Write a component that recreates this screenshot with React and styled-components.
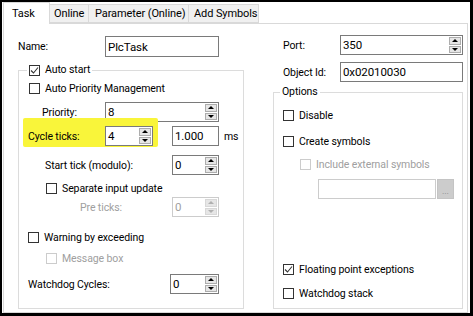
import React from 'react';
import styled, { createGlobalStyle } from 'styled-components';

const GlobalStyle = createGlobalStyle`
  body {
    margin: 0;
    background: #fff;
    font-family: Roboto, "Liberation Sans", Arial, sans-serif;
    font-size: 10.5px;
    letter-spacing: -0.1px;
    color: #000;
  }
`;

// outer window with the black frame of the screenshot
const Frame = styled.div`
  width: 473px;
  height: 316px;
  box-sizing: border-box;
  border-style: solid;
  border-color: #000;
  border-width: 2px 3px 3px 2px;
  padding: 0 2px 0 1px;
  background: #fff;
  display: flex;
  flex-direction: column;
`;

const TabStrip = styled.div`
  display: flex;
  align-items: flex-end;
  height: 21px;
  flex-shrink: 0;
`;

const Tab = styled.div`
  box-sizing: border-box;
  width: ${p => p.$w}px;
  height: ${p => (p.$active ? 22 : 19)}px;
  margin-bottom: ${p => (p.$active ? -1 : 0)}px;
  position: relative;
  z-index: ${p => (p.$active ? 1 : 0)};
  display: flex;
  align-items: center;
  padding-left: ${p => p.$pl}px;
  background: ${p => (p.$active ? '#fff' : '#f0f0f0')};
  border: 1px solid #d9d9d9;
  border-bottom: ${p => (p.$active ? 'none' : '1px solid #d9d9d9')};
  border-left: ${p => (p.$first ? '1px solid #d9d9d9' : 'none')};
  white-space: nowrap;
  font-size: 11px;
`;

const Panel = styled.div`
  flex: 1;
  display: flex;
  border: 1px solid #d9d9d9;
  padding: 0 4px 0 14px;
  gap: 29px;
`;

const Column = styled.div`
  width: ${p => p.$w}px;
  display: flex;
  flex-direction: column;
  padding-top: ${p => p.$pt}px;
  padding-bottom: 3px;
`;

const Row = styled.div`
  display: flex;
  align-items: center;
  height: ${p => p.$h || 20}px;
  margin-top: ${p => p.$mt || 0}px;
  padding-left: ${p => p.$pl || 0}px;
  flex-shrink: 0;
`;

const Label = styled.span`
  width: ${p => p.$w}px;
  flex-shrink: 0;
  white-space: nowrap;
  color: ${p => (p.$disabled ? '#a0a0a0' : '#000')};
`;

const Unit = styled.span`
  margin-left: 5px;
`;

const Group = styled.fieldset`
  margin: ${p => p.$mt}px 0 0;
  padding: 0 0 7px;
  border: 1px solid #dcdcdc;
  flex: 1;
  display: flex;
  flex-direction: column;
  min-width: 0;
`;

const Legend = styled.legend`
  margin-left: ${p => p.$ml}px;
  padding: 0 2px;
  line-height: 14px;
  display: flex;
  align-items: center;
`;

const Field = styled.div`
  box-sizing: border-box;
  display: flex;
  width: ${p => p.$w}px;
  height: ${p => p.$h || 20}px;
  margin-left: ${p => p.$ml || 0}px;
  border: 1px solid ${p => (p.$disabled ? '#cccccc' : '#7a7a7a')};
  background: #fff;
  color: ${p => (p.$disabled ? '#a0a0a0' : '#000')};
  flex-shrink: 0;
`;

const FieldText = styled.span`
  flex: 1;
  display: flex;
  align-items: center;
  padding-left: 2px;
  font-size: 11.5px;
`;

const Spinner = styled.div`
  width: 12px;
  margin: 1px;
  display: flex;
  flex-direction: column;
  gap: 1px;
`;

const SpinButton = styled.div`
  flex: 1;
  box-sizing: border-box;
  background: #e6e6e6;
  border: 1px solid ${p => (p.$disabled ? '#d8d8d8' : '#adadad')};
  display: flex;
  align-items: center;
  justify-content: center;
`;

const Arrow = styled.span`
  width: 0;
  height: 0;
  border-left: 3px solid transparent;
  border-right: 3px solid transparent;
  ${p => (p.$down ? 'border-top' : 'border-bottom')}: 3px solid ${p => (p.$disabled ? '#b0b0b0' : '#000')};
`;

const Browse = styled.div`
  box-sizing: border-box;
  width: 17px;
  height: 20px;
  margin-left: 1px;
  background: #cccccc;
  border: 1px solid #c4c4c4;
  color: #8a8a8a;
  display: flex;
  align-items: center;
  justify-content: center;
  font-size: 9px;
  padding-top: 3px;
`;

const Highlight = styled.span`
  align-self: stretch;
  display: flex;
  align-items: center;
  margin: -8px 0 -1px -5px;
  padding: 8px 5px 1px;
  background: #f9f53a;
  border-radius: 2px;
`;

const CheckLabel = styled.label`
  display: flex;
  align-items: center;
  gap: 5px;
  white-space: nowrap;
  color: ${p => (p.$disabled ? '#a0a0a0' : '#000')};
`;

const Box = styled.span`
  box-sizing: border-box;
  width: 11px;
  height: 11px;
  border: 1px solid ${p => (p.$disabled ? '#cccccc' : '#333')};
  background: #fff;
  display: flex;
  align-items: center;
  justify-content: center;
  flex-shrink: 0;
`;

const Check = ({ checked, disabled, children }) => (
  <CheckLabel $disabled={disabled}>
    <Box $disabled={disabled}>
      {checked && (
        <svg width="9" height="9" viewBox="0 0 9 9">
          <polyline points="1,4.5 3.5,7 8,1.5" fill="none" stroke="#333" strokeWidth="1.1" />
        </svg>
      )}
    </Box>
    {children}
  </CheckLabel>
);

const NumField = ({ w, value, disabled, ml }) => (
  <Field $w={w} $ml={ml} $disabled={disabled}>
    <FieldText>{value}</FieldText>
    <Spinner>
      <SpinButton $disabled={disabled}><Arrow $disabled={disabled} /></SpinButton>
      <SpinButton $disabled={disabled}><Arrow $down $disabled={disabled} /></SpinButton>
    </Spinner>
  </Field>
);

export default function App() {
  return (
    <>
      <GlobalStyle />
      <Frame>
        <TabStrip>
          <Tab $active $first $w={47} $pl={8}>Task</Tab>
          <Tab $w={39} $pl={4}>Online</Tab>
          <Tab $w={100} $pl={6}>Parameter (Online)</Tab>
          <Tab $w={70} $pl={5}>Add Symbols</Tab>
        </TabStrip>
        <Panel>
          <Column $w={226} $pt={12}>
            <Row $h={21}>
              <Label $w={87}>Name:</Label>
              <Field $w={114} $h={21}><FieldText>PlcTask</FieldText></Field>
            </Row>
            <Group $mt={6}>
              <Legend $ml={8}>
                <Check checked>Auto start</Check>
              </Legend>
              <Row $h={14} $mt={4} $pl={10}>
                <Check>Auto Priority Management</Check>
              </Row>
              <Row $mt={7} $pl={23}>
                <Label $w={63}>Priority:</Label>
                <NumField w={114} value="8" />
              </Row>
              <Row $mt={4} $pl={9}>
                <Highlight>
                  <Label $w={77}>Cycle ticks:</Label>
                  <NumField w={48} value="4" />
                </Highlight>
                <Field $w={47} $ml={14}><FieldText>1.000</FieldText></Field>
                <Unit>ms</Unit>
              </Row>
              <Row $mt={9} $pl={26}>
                <Label $w={127}>Start tick (modulo):</Label>
                <NumField w={47} value="0" />
              </Row>
              <Row $h={14} $mt={6} $pl={27}>
                <Check>Separate input update</Check>
              </Row>
              <Row $mt={2} $pl={61}>
                <Label $w={92} $disabled>Pre ticks:</Label>
                <NumField w={47} value="0" disabled />
              </Row>
              <Row $h={14} $mt={13} $pl={9}>
                <Check>Warning by exceeding</Check>
              </Row>
              <Row $h={14} $mt={7} $pl={27}>
                <Check disabled>Message box</Check>
              </Row>
              <Row $mt={9} $pl={9}>
                <Label $w={142}>Watchdog Cycles:</Label>
                <NumField w={49} value="0" />
              </Row>
            </Group>
          </Column>
          <Column $w={190} $pt={11}>
            <Row $pl={10}>
              <Label $w={57}>Port:</Label>
              <NumField w={123} value="350" />
            </Row>
            <Row $mt={7} $pl={10}>
              <Label $w={57}>Object Id:</Label>
              <Field $w={123}><FieldText>0x02010030</FieldText></Field>
            </Row>
            <Group $mt={3}>
              <Legend $ml={6}>Options</Legend>
              <Row $h={14} $mt={9} $pl={9}>
                <Check>Disable</Check>
              </Row>
              <Row $h={14} $mt={12} $pl={9}>
                <Check>Create symbols</Check>
              </Row>
              <Row $h={14} $mt={9} $pl={26}>
                <Check disabled>Include external symbols</Check>
              </Row>
              <Row $mt={8} $pl={44}>
                <Field $w={118} $disabled />
                <Browse>...</Browse>
              </Row>
              <Row $h={14} $mt={63} $pl={9}>
                <Check checked>Floating point exceptions</Check>
              </Row>
              <Row $h={14} $mt={10} $pl={9}>
                <Check>Watchdog stack</Check>
              </Row>
            </Group>
          </Column>
        </Panel>
      </Frame>
    </>
  );
}
